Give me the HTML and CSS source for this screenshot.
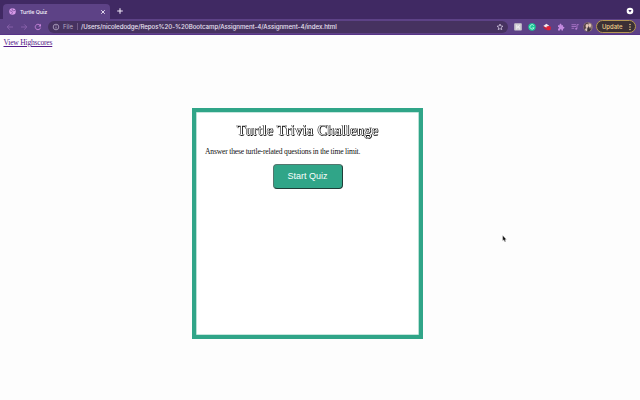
FILE: index.html
```html
<!DOCTYPE html>
<html lang="en">
<head>
<meta charset="utf-8">
<title>Turtle Quiz</title>
<link rel="stylesheet" href="styles.css">
</head>
<body>
<header class="tabs">
  <div class="tab">
    <svg class="globe" viewBox="0 0 8 8"><circle cx="4" cy="4" r="3.7" fill="#d79ae8"/><path d="M1 3.2l2.2.6.7 1.2-.8 1.8M4 .8l-.5 1.4 1.4.9 2.2-.3" fill="none" stroke="#684391" stroke-width=".8"/></svg>
    <span class="tab-title">Turtle Quiz</span>
    <svg class="close" viewBox="0 0 6 6"><path d="M1.2 1.2l3.6 3.6M4.8 1.2L1.2 4.8" stroke="#f1e9f8" stroke-width=".9"/></svg>
  </div>
  <svg class="plus" viewBox="0 0 8 8"><path d="M4 1.2v5.6M1.2 4h5.6" stroke="#f1e9f8" stroke-width="1.1"/></svg>
  <svg class="search" viewBox="0 0 8 8"><circle cx="4" cy="4" r="3.3" fill="#fff"/><path d="M2.4 3.1h3.2L4 5.4z" fill="#402963"/></svg>
</header>
<div class="toolbar">
  <svg class="nav" viewBox="0 0 8 8"><path d="M7 4H1.2M3.8 1.4L1.2 4l2.6 2.6" fill="none" stroke="#8b63ad" stroke-width=".9"/></svg>
  <svg class="nav" viewBox="0 0 8 8"><path d="M1 4h5.8M4.2 1.4L6.8 4 4.2 6.6" fill="none" stroke="#8b63ad" stroke-width=".9"/></svg>
  <svg class="nav" viewBox="0 0 8 8"><path d="M6.6 4.6A2.7 2.7 0 1 1 6 2.2" fill="none" stroke="#ca86dd" stroke-width=".9"/><path d="M7 .8v2.6H4.4z" fill="#ca86dd"/></svg>
  <div class="address">
    <svg class="info" viewBox="0 0 8 8"><circle cx="4" cy="4" r="2.8" fill="none" stroke="#c6bad4" stroke-width=".7"/><path d="M4 3.6v2M4 2.3v.8" stroke="#c6bad4" stroke-width=".7"/></svg>
    <span class="file">File</span><span class="rule"></span>
    <span class="url">/Users/nicoledodge/Repos%20-%20Bootcamp/Assignment-4/Assignment-4/index.html</span>
    <svg class="star" viewBox="0 0 8 8"><path d="M4 1l.8 2 2.2.2-1.7 1.4.5 2.1L4 5.6 2.2 6.7l.5-2.1L1 3.2 3.2 3z" fill="none" stroke="#ddd2ea" stroke-width=".7"/></svg>
  </div>
  <div class="extensions">
    <svg viewBox="0 0 8 8"><rect x=".2" y=".2" width="7.6" height="7.4" rx=".8" fill="#cbc8d0"/><path d="M2.8 1.7v4.8M5.2 1.7v1.6L3.3 4.2h1.9v2.3" fill="none" stroke="#f7f6f8" stroke-width=".9"/></svg>
    <svg viewBox="0 0 8 8"><circle cx="4" cy="4" r="3.7" fill="#19c998"/><path d="M5.9 2.6a2.2 2.2 0 1 0 .2 2.2H4.4" fill="none" stroke="#b9f7e2" stroke-width=".9"/></svg>
    <svg viewBox="0 0 8 8"><path d="M.3 3L3.4 .8l2.8 2L3.4 5z" fill="#f2e9ee"/><path d="M.3 3L3.4 5l-.3 2L.6 5z" fill="#c31f3b"/><rect x="3.4" y="3.3" width="4.3" height="4" rx="1" fill="#e51e32"/></svg>
    <svg viewBox="0 0 8 8"><path d="M1 2.2h1.7C2.1.4 4.9.4 4.4 2.2H6v1.7c1.9-.5 1.9 2.2 0 1.8v1.8H4.5c.4-1.7-1.8-1.7-1.5 0H1V5.6c1.5.2 1.5-1.9 0-1.7z" fill="#c48ae0"/></svg>
    <svg viewBox="0 0 8 8"><path d="M.5 1.7h4.7M.5 3.5h4.7M.5 5.3h2.7M6 5.6V1.7h1.8" fill="none" stroke="#b47bd0" stroke-width=".8"/><circle cx="5.2" cy="5.7" r="1" fill="#b47bd0"/></svg>
  </div>
  <svg class="avatar" viewBox="0 0 10 10"><circle cx="5" cy="5" r="4.8" fill="#8c7478"/><path d="M1 3.2Q3 0 5 .7L3.6 5 1.8 8Q0 6 1 3.2z" fill="#55404a"/><ellipse cx="4" cy="4" rx="1.4" ry="2" fill="#e4c6b8"/><ellipse cx="6.8" cy="3.3" rx="1.3" ry="1.9" fill="#dfc3b3"/><path d="M5.3 4l.9 2.4 2.3.2-2.2 2.8-2.7.1z" fill="#393039"/><path d="M2 7l2-1 .3 2.8-1 .2z" fill="#d8c8c4"/></svg>
  <div class="update"><span>Update</span><svg viewBox="0 0 2 8"><circle cx="1" cy="1.4" r=".75"/><circle cx="1" cy="4" r=".75"/><circle cx="1" cy="6.6" r=".75"/></svg></div>
</div>
<main>
  <a class="scores" href="#">View Highscores</a>
  <section class="quiz">
    <h1>Turtle Trivia Challenge</h1>
    <p>Answer these turtle-related questions in the time limit.</p>
    <button type="button">Start Quiz</button>
  </section>
</main>
<svg class="cursor" viewBox="0 0 5 8"><path d="M.7.4v5.4l1.2-1 .9 2 .9-.4-.8-1.9h1.5z" fill="#111" stroke="#ddd" stroke-width=".3"/></svg>
</body>
</html>
```
FILE: styles.css
```css
* { box-sizing: border-box; }
body { margin: 0; height: 400px; overflow: hidden; background: #fdfdfd; font-family: "Liberation Serif", serif; }
svg { display: block; flex: none; }
.tabs { height: 19px; background: #402963; display: flex; align-items: flex-end; padding-left: 3px; font-family: Inter, sans-serif; }
.tab { width: 107px; height: 15px; background: #5d4286; border-radius: 4px 4px 0 0; display: flex; align-items: center; padding: 0 4px 0 6px; }
.globe { width: 7px; height: 7px; }
.tab-title { margin-left: 4px; font-size: 5.4px; letter-spacing: -.08px; font-weight: 500; color: #f4effa; flex: 1; white-space: nowrap; }
.close { width: 6px; height: 6px; }
.plus { width: 8px; height: 8px; margin: 0 0 4px 6px; }
.search { width: 8px; height: 8px; margin: 0 6px 4px auto; }
.toolbar { height: 16px; background: #5d4286; display: flex; align-items: center; padding: 0 4px 0 6px; font-family: Inter, sans-serif; border-bottom: 1px solid #573488; }
.nav { width: 8px; height: 8px; margin-right: 6.2px; }
.address { width: 460px; height: 12px; border-radius: 6px; background: #463260; display: flex; align-items: center; padding: 0 4px; margin-left: -.6px; }
.info { width: 8px; height: 8px; }
.file { margin-left: 3px; font-size: 6px; color: #b6a9c5; }
.rule { width: 1px; height: 7px; margin: 0 3px 0 4px; background: #705b87; }
.url { font-size: 6.15px; letter-spacing: -.045px; font-weight: 500; color: #e9e1f1; white-space: nowrap; flex: 1; }
.star { width: 8px; height: 8px; }
.extensions { display: flex; gap: 6.3px; margin-left: 6px; }
.extensions svg { width: 8px; height: 8px; }
.avatar { width: 10px; height: 10px; margin-left: 4px; }
.update { width: 40px; height: 13px; margin-left: auto; border: 1px solid #b69852; border-radius: 7px; background: #3b3035; color: #f0d18a; display: flex; align-items: center; justify-content: space-between; padding: 0 4px 0 5px; font-size: 5.9px; font-weight: 500; }
.update svg { width: 2px; height: 8px; fill: #f0d18a; }
main { display: flex; flex-direction: column; }
.scores { height: 10px; margin: 3px 0 0 3.5px; align-self: flex-start; font-size: 7.6px; letter-spacing: -.22px; line-height: 10px; color: #551a8b; text-decoration-thickness: .6px; }
.quiz { width: 231px; height: 231px; margin: 60px 0 0 192px; border: 4px solid #30a588; background: #fff; box-shadow: inset 0 0 0 .6px #8bcdbc; padding: 9px 9px 10px; display: flex; flex-direction: column; align-items: center; }
h1 { margin: 0; font-size: 14.4px; line-height: 18px; font-weight: 400; color: #fff; white-space: nowrap; letter-spacing: .3px; text-shadow: -.5px 0 #000, .7px 0 #000, 0 -.5px #000, .5px .6px #000; opacity: .99; will-change: transform; }
p { margin: 8.4px 0 0; align-self: flex-start; font-size: 7.6px; letter-spacing: -.18px; line-height: 10px; color: #111; white-space: nowrap; }
button { width: 70px; height: 25px; margin-top: 6.2px; padding: 0; border: 1px solid; border-color: #53776f #203d38 #203d38 #53776f; border-radius: 4px; background: #30a588; color: #f8fffc; font: 9px "Liberation Sans", sans-serif; }
.cursor { position: absolute; left: 502px; top: 235px; width: 5px; height: 8px; }
```
